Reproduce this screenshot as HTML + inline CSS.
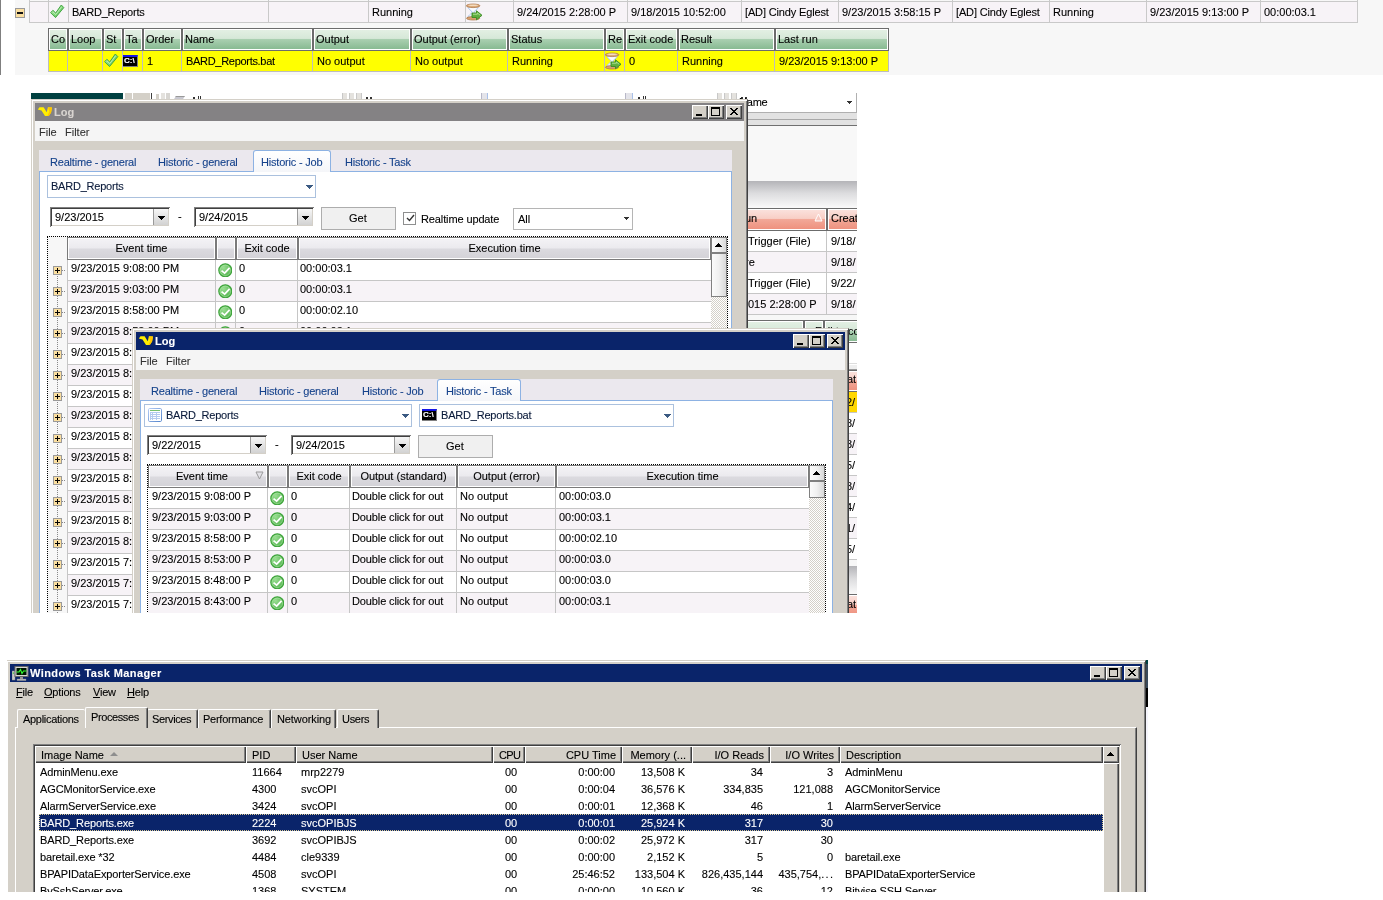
<!DOCTYPE html>
<html><head><meta charset="utf-8"><title>Log</title>
<style>
html,body{margin:0;padding:0;background:#fff}
body{width:1383px;height:900px;position:relative;overflow:hidden;font:11px/13px "Liberation Sans",sans-serif;color:#000}
div,span,svg{position:absolute;box-sizing:border-box}
.t{white-space:nowrap;line-height:13px;font-size:11px;-webkit-text-stroke:.1px}
.gl{will-change:transform}
.b{font-weight:bold}
.w{color:#fff}
.bl{color:#15428b}
#top{left:0;top:0;width:1383px;height:75px;overflow:hidden}
#mid{left:31px;top:93px;width:826px;height:520px;overflow:hidden;background:#f7f7f7}
#tm{left:7px;top:660px;width:1141px;height:232px;overflow:hidden;background:#d4d0c8}
.gh{border:1px solid #6c6c6c;background:linear-gradient(#e4f0e4 0,#d6e8d8 45%,#a9cfb0 50%,#84b88f 100%);box-shadow:inset 0 0 0 1px #fff}
.yc{background:#ff0;border-right:1px solid #bdbdbd}
.sh{border:1px solid #6c6c6c;background:linear-gradient(#fbe3de 0,#f8cfc6 45%,#f2a898 50%,#ee8f7c 100%);box-shadow:inset 0 0 0 1px #fff}
.lh{border:1px solid #7a7a7a;background:linear-gradient(#f4f3f6 0,#ebeaee 48%,#dbdadf 52%,#d3d2d7 100%);box-shadow:inset 0 0 0 1px #fff}
.win{background:#d4d0c8;border:1px solid;border-color:#d4d0c8 #404040 #404040 #d4d0c8;box-shadow:inset 1px 1px 0 #fff,inset -1px -1px 0 #808080}
.sbb{border:1px solid #808080;background:linear-gradient(90deg,#fbfbfb,#f0f0f0 50%,#d9d9d9)}
.btn{background:#d4d0c8;box-shadow:inset 1px 1px 0 #fff,inset -1px -1px 0 #404040,inset -2px -2px 0 #808080}
.sunk{background:#fff;box-shadow:inset 1px 1px 0 #808080,inset -1px -1px 0 #fff,inset 2px 2px 0 #404040,inset -2px -2px 0 #d4d0c8}
</style></head>
<body>
<div id="top"><div class="gl" style="left:0;top:0;width:1383px;height:75px">
<div style="left:0px;top:0px;width:1px;height:75px;background:#7f7f7f"></div>
<div style="left:15px;top:0px;width:1368px;height:75px;background:#f7f7f7"></div>
<div style="left:29px;top:1px;width:1329px;height:22px;background:#f7f3f7;border-top:1px solid #c9c9c9;border-bottom:1px solid #c9c9c9"></div>
<div style="left:29px;top:0px;width:1px;height:23px;background:#c9c9c9"></div>
<div style="left:48px;top:0px;width:1px;height:23px;background:#c9c9c9"></div>
<div style="left:68px;top:0px;width:1px;height:23px;background:#c9c9c9"></div>
<div style="left:268px;top:0px;width:1px;height:23px;background:#c9c9c9"></div>
<div style="left:368px;top:0px;width:1px;height:23px;background:#c9c9c9"></div>
<div style="left:465px;top:0px;width:1px;height:23px;background:#c9c9c9"></div>
<div style="left:513px;top:0px;width:1px;height:23px;background:#c9c9c9"></div>
<div style="left:627px;top:0px;width:1px;height:23px;background:#c9c9c9"></div>
<div style="left:741px;top:0px;width:1px;height:23px;background:#c9c9c9"></div>
<div style="left:838px;top:0px;width:1px;height:23px;background:#c9c9c9"></div>
<div style="left:952px;top:0px;width:1px;height:23px;background:#c9c9c9"></div>
<div style="left:1049px;top:0px;width:1px;height:23px;background:#c9c9c9"></div>
<div style="left:1146px;top:0px;width:1px;height:23px;background:#c9c9c9"></div>
<div style="left:1260px;top:0px;width:1px;height:23px;background:#c9c9c9"></div>
<div style="left:1357px;top:0px;width:1px;height:23px;background:#c9c9c9"></div>
<div style="left:15px;top:8px;width:10px;height:10px;background:#fbdf9f;border:1px solid #9a9a9a"><div style="left:1px;top:3px;width:6px;height:2px;background:#111"></div></div>
<svg style="left:50px;top:4px" width="15" height="15" viewBox="0 0 15 15"><defs><linearGradient id="ck1" x1="0" y1="0" x2="1" y2="1"><stop offset="0" stop-color="#d0f4c8"/><stop offset=".55" stop-color="#7ad474"/><stop offset="1" stop-color="#52b84e"/></linearGradient></defs><path d="M0.6 8.7 L2.9 6.3 L5.7 9 L11.3 1 L13.8 3.6 L5.5 13.6 Z" fill="url(#ck1)" stroke="#42a642" stroke-width="1" stroke-linejoin="round"/><path d="M2.9 7.8 L5.8 10.6 L11.6 2.8" fill="none" stroke="#d4f6cc" stroke-width=".9" opacity=".8"/></svg>
<span class="t" style="left:72px;top:6px;letter-spacing:-.22px">BARD_Reports</span>
<span class="t" style="left:372px;top:6px;">Running</span>
<svg style="left:466px;top:3px" width="17" height="18" viewBox="0 0 17 18"><path d="M1.8 3.2 H12.4 C12.4 6.4 8.3 7.8 8.3 9.2 C8.3 10.6 12.4 12 12.4 15 H1.8 C1.8 12 5.9 10.6 5.9 9.2 C5.9 7.8 1.8 6.4 1.8 3.2 Z" fill="#e6f0fc" stroke="#a4c4ee" stroke-width=".8"/><path d="M3.4 4.6 H10.8 C10.2 6.4 7.8 7.4 7.1 8.6 C6.4 7.4 4 6.4 3.4 4.6Z" fill="#fafcff"/><ellipse cx="7.1" cy="15.3" rx="6.6" ry="1.7" fill="#d8a070" stroke="#a87040" stroke-width=".7"/><ellipse cx="7.1" cy="2.8" rx="6.8" ry="1.8" fill="#dcaa7a" stroke="#a87040" stroke-width=".7"/><ellipse cx="7.1" cy="2.3" rx="5" ry=".8" fill="#f4dcc0"/><path d="M6 10 H10.5 V7.8 L16 12.3 L10.5 16.8 V14.5 H6 Z" fill="#5fb040" stroke="#3a8a24" stroke-width=".9" stroke-linejoin="round"/><path d="M7 11.2 H11.4 V10 L14.2 12.3" fill="none" stroke="#b4e49c" stroke-width=".9"/></svg>
<span class="t" style="left:517px;top:6px;">9/24/2015 2:28:00 P</span>
<span class="t" style="left:631px;top:6px;">9/18/2015 10:52:00</span>
<span class="t" style="left:745px;top:6px;letter-spacing:-.15px">[AD] Cindy Eglest</span>
<span class="t" style="left:842px;top:6px;">9/23/2015 3:58:15 P</span>
<span class="t" style="left:956px;top:6px;letter-spacing:-.15px">[AD] Cindy Eglest</span>
<span class="t" style="left:1053px;top:6px;">Running</span>
<span class="t" style="left:1150px;top:6px;">9/23/2015 9:13:00 P</span>
<span class="t" style="left:1264px;top:6px;">00:00:03.1</span>
<div class="gh" style="left:48px;top:28px;width:20px;height:23px;"></div>
<span class="t" style="left:51px;top:33px;">Co</span>
<div class="yc" style="left:48px;top:51px;width:20px;height:21px;border-bottom:1px solid #bdbdbd"></div>
<div class="gh" style="left:68px;top:28px;width:35px;height:23px;"></div>
<span class="t" style="left:71px;top:33px;">Loop</span>
<div class="yc" style="left:68px;top:51px;width:35px;height:21px;border-bottom:1px solid #bdbdbd"></div>
<div class="gh" style="left:103px;top:28px;width:20px;height:23px;"></div>
<span class="t" style="left:106px;top:33px;">St</span>
<div class="yc" style="left:103px;top:51px;width:20px;height:21px;border-bottom:1px solid #bdbdbd"></div>
<div class="gh" style="left:123px;top:28px;width:20px;height:23px;"></div>
<span class="t" style="left:126px;top:33px;">Ta</span>
<div class="yc" style="left:123px;top:51px;width:20px;height:21px;border-bottom:1px solid #bdbdbd"></div>
<div class="gh" style="left:143px;top:28px;width:39px;height:23px;"></div>
<span class="t" style="left:146px;top:33px;">Order</span>
<div class="yc" style="left:143px;top:51px;width:39px;height:21px;border-bottom:1px solid #bdbdbd"></div>
<span class="t" style="left:147px;top:55px;">1</span>
<div class="gh" style="left:182px;top:28px;width:131px;height:23px;"></div>
<span class="t" style="left:185px;top:33px;">Name</span>
<div class="yc" style="left:182px;top:51px;width:131px;height:21px;border-bottom:1px solid #bdbdbd"></div>
<span class="t" style="left:186px;top:55px;letter-spacing:-.3px">BARD_Reports.bat</span>
<div class="gh" style="left:313px;top:28px;width:98px;height:23px;"></div>
<span class="t" style="left:316px;top:33px;">Output</span>
<div class="yc" style="left:313px;top:51px;width:98px;height:21px;border-bottom:1px solid #bdbdbd"></div>
<span class="t" style="left:317px;top:55px;">No output</span>
<div class="gh" style="left:411px;top:28px;width:97px;height:23px;"></div>
<span class="t" style="left:414px;top:33px;">Output (error)</span>
<div class="yc" style="left:411px;top:51px;width:97px;height:21px;border-bottom:1px solid #bdbdbd"></div>
<span class="t" style="left:415px;top:55px;">No output</span>
<div class="gh" style="left:508px;top:28px;width:97px;height:23px;"></div>
<span class="t" style="left:511px;top:33px;">Status</span>
<div class="yc" style="left:508px;top:51px;width:97px;height:21px;border-bottom:1px solid #bdbdbd"></div>
<span class="t" style="left:512px;top:55px;">Running</span>
<div class="gh" style="left:605px;top:28px;width:20px;height:23px;"></div>
<span class="t" style="left:608px;top:33px;">Re</span>
<div class="yc" style="left:605px;top:51px;width:20px;height:21px;border-bottom:1px solid #bdbdbd"></div>
<div class="gh" style="left:625px;top:28px;width:53px;height:23px;"></div>
<span class="t" style="left:628px;top:33px;">Exit code</span>
<div class="yc" style="left:625px;top:51px;width:53px;height:21px;border-bottom:1px solid #bdbdbd"></div>
<span class="t" style="left:629px;top:55px;">0</span>
<div class="gh" style="left:678px;top:28px;width:97px;height:23px;"></div>
<span class="t" style="left:681px;top:33px;">Result</span>
<div class="yc" style="left:678px;top:51px;width:97px;height:21px;border-bottom:1px solid #bdbdbd"></div>
<span class="t" style="left:682px;top:55px;">Running</span>
<div class="gh" style="left:775px;top:28px;width:114px;height:23px;"></div>
<span class="t" style="left:778px;top:33px;">Last run</span>
<div class="yc" style="left:775px;top:51px;width:114px;height:21px;border-bottom:1px solid #bdbdbd"></div>
<span class="t" style="left:779px;top:55px;">9/23/2015 9:13:00 P</span>
<div style="left:48px;top:51px;width:1px;height:21px;background:#bdbdbd"></div>
<svg style="left:104px;top:53px" width="15" height="15" viewBox="0 0 15 15"><defs><linearGradient id="ck2" x1="0" y1="0" x2="1" y2="1"><stop offset="0" stop-color="#d0f4c8"/><stop offset=".55" stop-color="#7ad474"/><stop offset="1" stop-color="#52b84e"/></linearGradient></defs><path d="M0.6 8.7 L2.9 6.3 L5.7 9 L11.3 1 L13.8 3.6 L5.5 13.6 Z" fill="url(#ck2)" stroke="#42a642" stroke-width="1" stroke-linejoin="round"/><path d="M2.9 7.8 L5.8 10.6 L11.6 2.8" fill="none" stroke="#d4f6cc" stroke-width=".9" opacity=".8"/></svg>
<div style="left:123px;top:55px;width:15px;height:12px;background:#000;border-top:2px solid #1414e6;border-right:1px solid #808080;border-bottom:1px solid #808080;overflow:hidden"><span class="t" style="left:1px;top:-2px;font:bold 8px/12px 'Liberation Sans',sans-serif;color:#fff;letter-spacing:0">C:\</span></div>
<svg style="left:605px;top:52px" width="17" height="18" viewBox="0 0 17 18"><path d="M1.8 3.2 H12.4 C12.4 6.4 8.3 7.8 8.3 9.2 C8.3 10.6 12.4 12 12.4 15 H1.8 C1.8 12 5.9 10.6 5.9 9.2 C5.9 7.8 1.8 6.4 1.8 3.2 Z" fill="#e6f0fc" stroke="#a4c4ee" stroke-width=".8"/><path d="M3.4 4.6 H10.8 C10.2 6.4 7.8 7.4 7.1 8.6 C6.4 7.4 4 6.4 3.4 4.6Z" fill="#fafcff"/><ellipse cx="7.1" cy="15.3" rx="6.6" ry="1.7" fill="#d8a070" stroke="#a87040" stroke-width=".7"/><ellipse cx="7.1" cy="2.8" rx="6.8" ry="1.8" fill="#dcaa7a" stroke="#a87040" stroke-width=".7"/><ellipse cx="7.1" cy="2.3" rx="5" ry=".8" fill="#f4dcc0"/><path d="M6 10 H10.5 V7.8 L16 12.3 L10.5 16.8 V14.5 H6 Z" fill="#5fb040" stroke="#3a8a24" stroke-width=".9" stroke-linejoin="round"/><path d="M7 11.2 H11.4 V10 L14.2 12.3" fill="none" stroke="#b4e49c" stroke-width=".9"/></svg>
</div></div>
<div id="mid"><div class="gl" style="left:-31px;top:-93px;width:1383px;height:900px">
<div style="left:31px;top:93px;width:826px;height:6px;background:#fff"></div>
<div style="left:31px;top:93px;width:92px;height:6px;background:#004040"></div>
<div style="left:125px;top:93px;width:7px;height:6px;background:#d4d0c8"></div>
<div style="left:133px;top:93px;width:17px;height:6px;background:#d4d0c8"></div>
<div style="left:151px;top:93px;width:1px;height:6px;background:#404040"></div>
<div style="left:156px;top:94px;width:3px;height:5px;background:#d4d0c8"></div>
<div style="left:161px;top:93px;width:4px;height:6px;background:#e4e2de"></div>
<div style="left:166px;top:93px;width:4px;height:6px;background:#d8d6d2"></div>
<div style="left:175px;top:96px;width:9px;height:3px;background:#c8c8d0;border-top:1px solid #999;transform:skewX(-30deg)"></div>
<div style="left:193px;top:97px;width:2px;height:2px;background:#333"></div>
<div style="left:198px;top:96px;width:1px;height:3px;background:#333"></div>
<div style="left:200px;top:96px;width:1px;height:3px;background:#333"></div>
<div style="left:342px;top:93px;width:5px;height:6px;background:#e4e2de;border-left:1px solid #c8c8c8"></div>
<div style="left:349px;top:93px;width:5px;height:6px;background:#e4e2de;border-left:1px solid #c8c8c8"></div>
<div style="left:356px;top:93px;width:6px;height:6px;background:#e4e2de;border-left:1px solid #c8c8c8;border-right:1px solid #c8c8c8"></div>
<div style="left:366px;top:97px;width:2px;height:2px;background:#333"></div>
<div style="left:370px;top:97px;width:2px;height:2px;background:#333"></div>
<div style="left:481px;top:93px;width:7px;height:6px;background:#e4e4ea;border-left:1px solid #b8b8c8;border-right:1px solid #a8c0e8"></div>
<div style="left:625px;top:93px;width:8px;height:6px;background:#e4e4ea;border-left:1px solid #b8b8c8;border-right:1px solid #a8c0e8"></div>
<div style="left:638px;top:97px;width:2px;height:2px;background:#333"></div>
<div style="left:643px;top:96px;width:1px;height:3px;background:#333"></div>
<div style="left:645px;top:96px;width:1px;height:3px;background:#333"></div>
<div style="left:717px;top:93px;width:5px;height:6px;background:#e4e2de;border-left:1px solid #c8c8c8"></div>
<div style="left:724px;top:93px;width:5px;height:6px;background:#e4e2de;border-left:1px solid #c8c8c8"></div>
<div style="left:731px;top:93px;width:6px;height:6px;background:#e4e2de;border-left:1px solid #c8c8c8;border-right:1px solid #c8c8c8"></div>
<div style="left:741px;top:97px;width:2px;height:2px;background:#333"></div>
<div style="left:745px;top:97px;width:2px;height:2px;background:#333"></div>
<div style="left:748px;top:93px;width:109px;height:20px;background:#fff;border-right:1px solid #b0b0b0;border-bottom:1px solid #b0b0b0"></div>
<span class="t" style="left:739px;top:96px;letter-spacing:-.2px">Name</span>
<svg style="left:847px;top:101px" width="5" height="3" viewBox="0 0 5 3" shape-rendering="crispEdges"><path d="M0 0 H5 L2.5 3 Z" fill="#333"/></svg>
<div style="left:748px;top:113px;width:109px;height:13px;background:#e2e2e2;border-bottom:1px solid #707070"></div>
<div style="left:748px;top:119px;width:109px;height:1px;background:#a8a8a8"></div>
<div style="left:748px;top:126px;width:109px;height:55px;background:#f8f8f8"></div>
<div style="left:748px;top:181px;width:109px;height:27px;background:linear-gradient(#b4b4b8,#dcdcde 45%,#fafafa)"></div>
<div class="sh" style="left:700px;top:208px;width:127px;height:23px;"></div>
<span class="t" style="left:745px;top:212px;">un</span>
<svg style="left:814px;top:213px" width="9" height="9" viewBox="0 0 9 9"><path d="M4.5 1 L8 8 H1 Z" fill="#f6c8c0" stroke="#fff" stroke-width="1"/></svg>
<div class="sh" style="left:827px;top:208px;width:60px;height:23px;"></div>
<span class="t" style="left:831px;top:212px;">Creat</span>
<div style="left:700px;top:231px;width:127px;height:21px;background:#fff;border-right:1px solid #c6c6c6;border-bottom:1px solid #c6c6c6"></div>
<div style="left:827px;top:231px;width:60px;height:21px;background:#fff;border-bottom:1px solid #c6c6c6"></div>
<span class="t" style="left:748px;top:235px;">Trigger (File)</span>
<span class="t" style="left:831px;top:235px;">9/18/</span>
<div style="left:700px;top:252px;width:127px;height:21px;background:#f7f3f7;border-right:1px solid #c6c6c6;border-bottom:1px solid #c6c6c6"></div>
<div style="left:827px;top:252px;width:60px;height:21px;background:#f7f3f7;border-bottom:1px solid #c6c6c6"></div>
<span class="t" style="left:745px;top:256px;">re</span>
<span class="t" style="left:831px;top:256px;">9/18/</span>
<div style="left:700px;top:273px;width:127px;height:21px;background:#fff;border-right:1px solid #c6c6c6;border-bottom:1px solid #c6c6c6"></div>
<div style="left:827px;top:273px;width:60px;height:21px;background:#fff;border-bottom:1px solid #c6c6c6"></div>
<span class="t" style="left:748px;top:277px;">Trigger (File)</span>
<span class="t" style="left:831px;top:277px;">9/22/</span>
<div style="left:700px;top:294px;width:127px;height:21px;background:#f7f3f7;border-right:1px solid #c6c6c6;border-bottom:1px solid #c6c6c6"></div>
<div style="left:827px;top:294px;width:60px;height:21px;background:#f7f3f7;border-bottom:1px solid #c6c6c6"></div>
<span class="t" style="left:748px;top:298px;">015 2:28:00 P</span>
<span class="t" style="left:831px;top:298px;">9/18/</span>
<div style="left:748px;top:315px;width:109px;height:6px;background:#f7f7f7"></div>
<div class="gh" style="left:700px;top:320px;width:104px;height:23px;"></div>
<div class="gh" style="left:804px;top:320px;width:20px;height:23px;"></div>
<div class="gh" style="left:824px;top:320px;width:80px;height:23px;"></div>
<span class="t" style="left:815px;top:325px;">Fail to co</span>
<div style="left:849px;top:343px;width:8px;height:270px;background:#fff"></div>
<div style="left:849px;top:363px;width:8px;height:1px;background:#ddd"></div>
<div style="left:849px;top:365px;width:8px;height:4px;background:#eee"></div>
<div style="left:849px;top:369px;width:8px;height:1px;background:#999"></div>
<div class="sh" style="left:800px;top:370px;width:80px;height:22px;border-left:0"></div>
<span class="t" style="left:847px;top:373px;">at</span>
<div style="left:849px;top:392px;width:8px;height:21px;background:#ffd700;border-bottom:1px solid #c6c6c6"></div>
<span class="t" style="left:846px;top:396px;">2/</span>
<div style="left:849px;top:413px;width:8px;height:21px;background:#fff;border-bottom:1px solid #c6c6c6"></div>
<span class="t" style="left:846px;top:417px;">8/</span>
<div style="left:849px;top:434px;width:8px;height:21px;background:#f7f3f7;border-bottom:1px solid #c6c6c6"></div>
<span class="t" style="left:846px;top:438px;">8/</span>
<div style="left:849px;top:455px;width:8px;height:21px;background:#fff;border-bottom:1px solid #c6c6c6"></div>
<span class="t" style="left:846px;top:459px;">5/</span>
<div style="left:849px;top:476px;width:8px;height:21px;background:#f7f3f7;border-bottom:1px solid #c6c6c6"></div>
<span class="t" style="left:846px;top:480px;">8/</span>
<div style="left:849px;top:497px;width:8px;height:21px;background:#fff;border-bottom:1px solid #c6c6c6"></div>
<span class="t" style="left:846px;top:501px;">4/</span>
<div style="left:849px;top:518px;width:8px;height:21px;background:#f7f3f7;border-bottom:1px solid #c6c6c6"></div>
<span class="t" style="left:846px;top:522px;">1/</span>
<div style="left:849px;top:539px;width:8px;height:21px;background:#fff;border-bottom:1px solid #c6c6c6"></div>
<span class="t" style="left:846px;top:543px;">5/</span>
<div style="left:849px;top:560px;width:8px;height:6px;background:#f7f7f7"></div>
<div style="left:849px;top:566px;width:8px;height:28px;background:linear-gradient(#b4b4b8,#dcdcde 45%,#fafafa)"></div>
<div class="sh" style="left:800px;top:594px;width:80px;height:23px;border-left:0"></div>
<span class="t" style="left:847px;top:598px;">at</span>
<div class="win" style="left:31px;top:99px;width:717px;height:600px;"></div>
<div style="left:35px;top:103px;width:709px;height:18px;background:#848284"></div>
<svg style="left:37px;top:106px" width="18" height="12" viewBox="0 0 18 12"><path d="M0.8 3.6 L2.5 1.3 L6.6 1.3 L9.75 6.2 L10.9 1.3 L15 1.5 L14.1 6.5 L11.8 9.9 L8 9.9 L4.5 4.4 L2.5 3.9 Z" fill="#ffee00"/><path d="M10.9 1.3 L15 1.5 L14.1 6.5 L11.8 9.9 L10.4 9.9 L12.3 5.5 Z" fill="#ffc400"/></svg>
<span class="t" style="left:54px;top:106px;color:#d8d4d0;font-weight:bold;letter-spacing:0px">Log</span>
<div class="btn" style="left:726px;top:105px;width:16px;height:14px;"><svg style="left:4px;top:3px" width="8" height="7" viewBox="0 0 8 7" shape-rendering="crispEdges"><path d="M0 0h2v1h1v1h2v-1h1v-1h2v1h-1v1h-1v1h-1v1h1v1h1v1h1v1h-2v-1h-1v-1h-2v1h-1v1h-2v-1h1v-1h1v-1h1v-1h-1v-1h-1v-1h-1z" fill="#000"/></svg></div>
<div class="btn" style="left:708px;top:105px;width:16px;height:14px;"><div style="left:3px;top:2px;width:9px;height:9px;border:1px solid #000;border-top-width:2px"></div></div>
<div class="btn" style="left:692px;top:105px;width:16px;height:14px;"><div style="left:4px;top:9px;width:6px;height:2px;background:#000"></div></div>
<div style="left:35px;top:121px;width:709px;height:20px;background:#f5f5f5"></div>
<span class="t" style="left:39px;top:126px;color:#333">File</span>
<span class="t" style="left:65px;top:126px;color:#333">Filter</span>
<div style="left:39px;top:150px;width:693px;height:21px;background:#ebe8ee"></div>
<div style="left:39px;top:171px;width:693px;height:600px;background:#fff;border:1px solid #8db2e3"></div>
<div style="left:253px;top:150px;width:78px;height:22px;background:linear-gradient(#fff,#f5f6f9);border:1px solid #8db2e3;border-bottom:0;border-radius:3px 3px 0 0"></div>
<span class="t bl" style="left:50px;top:156px;letter-spacing:-.2px">Realtime - general</span>
<span class="t bl" style="left:158px;top:156px;letter-spacing:-.2px">Historic - general</span>
<span class="t bl" style="left:261px;top:156px;letter-spacing:-.2px">Historic - Job</span>
<span class="t bl" style="left:345px;top:156px;letter-spacing:-.2px">Historic - Task</span>
<div style="left:47px;top:175px;width:269px;height:23px;background:#fff;border:1px solid #abc1de"></div>
<span class="t" style="left:51px;top:180px;letter-spacing:-.22px;color:#0a1a3a">BARD_Reports</span>
<svg style="left:306px;top:185px" width="7" height="4" viewBox="0 0 7 4" shape-rendering="crispEdges"><path d="M0 0 H7 L3.5 4 Z" fill="#3b5a82"/></svg>
<div class="sunk" style="left:50px;top:207px;width:120px;height:20px;"></div>
<span class="t" style="left:55px;top:211px;">9/23/2015</span>
<div style="left:153px;top:209px;width:15px;height:16px;background:linear-gradient(#f6f6f6,#d2d2d2);border-left:1px solid #9a9a9a"><svg style="left:4px;top:7px" width="7" height="4" viewBox="0 0 7 4" shape-rendering="crispEdges"><path d="M0 0 H7 L3.5 4 Z" fill="#000"/></svg>
</div>
<span class="t" style="left:178px;top:210px;">-</span>
<div class="sunk" style="left:194px;top:207px;width:120px;height:20px;"></div>
<span class="t" style="left:199px;top:211px;">9/24/2015</span>
<div style="left:297px;top:209px;width:15px;height:16px;background:linear-gradient(#f6f6f6,#d2d2d2);border-left:1px solid #9a9a9a"><svg style="left:4px;top:7px" width="7" height="4" viewBox="0 0 7 4" shape-rendering="crispEdges"><path d="M0 0 H7 L3.5 4 Z" fill="#000"/></svg>
</div>
<div style="left:321px;top:207px;width:75px;height:23px;background:#f0f0f0;border:1px solid #adadad"></div>
<span class="t" style="left:349px;top:212px;">Get</span>
<div style="left:403px;top:212px;width:13px;height:13px;background:#fff;border:1px solid #8e8f8f"></div>
<svg style="left:406px;top:214px" width="9" height="8" viewBox="0 0 9 8"><path d="M1 4 L3.5 6.5 L8 1" fill="none" stroke="#333" stroke-width="1.4"/></svg>
<span class="t" style="left:421px;top:213px;letter-spacing:-.12px">Realtime update</span>
<div style="left:513px;top:208px;width:120px;height:22px;background:#fff;border:1px solid #b5b5b5"></div>
<span class="t" style="left:518px;top:213px;">All</span>
<svg style="left:624px;top:217px" width="5" height="3" viewBox="0 0 5 3" shape-rendering="crispEdges"><path d="M0 0 H5 L2.5 3 Z" fill="#333"/></svg>
<div style="left:47px;top:236px;width:681px;height:400px;border:1px dotted #000;background:#f7f7f7"></div>
<div class="lh" style="left:67px;top:237px;width:149px;height:23px;"></div>
<span class="t" style="left:67px;top:242px;width:149px;text-align:center">Event time</span>
<div class="lh" style="left:216px;top:237px;width:20px;height:23px;"></div>
<div class="lh" style="left:236px;top:237px;width:62px;height:23px;"></div>
<span class="t" style="left:236px;top:242px;width:62px;text-align:center">Exit code</span>
<div class="lh" style="left:298px;top:237px;width:413px;height:23px;"></div>
<span class="t" style="left:298px;top:242px;width:413px;text-align:center">Execution time</span>
<div style="left:711px;top:237px;width:16px;height:400px;background-image:repeating-conic-gradient(#fff 0 25%,#d4d0c8 0 50%);background-size:2px 2px"></div>
<div class="sbb" style="left:711px;top:237px;width:16px;height:16px;"><svg style="left:3px;top:5px" width="7" height="4" viewBox="0 0 7 4" shape-rendering="crispEdges"><path d="M0 4 H7 L3.5 0 Z" fill="#000"/></svg></div>
<div class="sbb" style="left:711px;top:253px;width:16px;height:44px;"></div>
<div style="left:57px;top:276px;width:1px;height:360px;background-image:repeating-linear-gradient(#888 0 1px,transparent 1px 2px)"></div>
<div style="left:67px;top:260px;width:644px;height:21px;background:#fff;border-bottom:1px solid #c6c6c6"></div>
<div style="left:67px;top:260px;width:1px;height:21px;background:#c6c6c6"></div>
<div style="left:215px;top:260px;width:1px;height:21px;background:#c6c6c6"></div>
<div style="left:235px;top:260px;width:1px;height:21px;background:#c6c6c6"></div>
<div style="left:297px;top:260px;width:1px;height:21px;background:#c6c6c6"></div>
<div style="left:62px;top:270px;width:4px;height:1px;background-image:repeating-linear-gradient(90deg,#888 0 1px,transparent 1px 2px)"></div>
<div style="left:53px;top:266px;width:9px;height:9px;background:#fbdf9f;border:1px solid #9a9a9a"><div style="left:1px;top:3px;width:5px;height:1px;background:#000"></div><div style="left:3px;top:1px;width:1px;height:5px;background:#000"></div></div>
<span class="t" style="left:71px;top:262px;">9/23/2015 9:08:00 PM</span>
<svg style="left:217.7px;top:262.7px" width="14.6" height="14.6" viewBox="0 0 16 16"><defs><radialGradient id="g1" cx=".35" cy=".3" r=".85"><stop offset="0" stop-color="#9adf92"/><stop offset="1" stop-color="#46aa42"/></radialGradient></defs><circle cx="8" cy="8" r="7.1" fill="url(#g1)" stroke="#3fa43c" stroke-width="1.3"/><circle cx="8" cy="8" r="5.7" fill="none" stroke="#b6ecb0" stroke-width=".7" opacity=".8"/><path d="M4.6 9 L7.3 11.1 L12 6" fill="none" stroke="#fff" stroke-width="1.9" stroke-linecap="square" stroke-linejoin="miter"/></svg>
<span class="t" style="left:239px;top:262px;">0</span>
<span class="t" style="left:300px;top:262px;">00:00:03.1</span>
<div style="left:67px;top:281px;width:644px;height:21px;background:#f7f3f7;border-bottom:1px solid #c6c6c6"></div>
<div style="left:67px;top:281px;width:1px;height:21px;background:#c6c6c6"></div>
<div style="left:215px;top:281px;width:1px;height:21px;background:#c6c6c6"></div>
<div style="left:235px;top:281px;width:1px;height:21px;background:#c6c6c6"></div>
<div style="left:297px;top:281px;width:1px;height:21px;background:#c6c6c6"></div>
<div style="left:62px;top:291px;width:4px;height:1px;background-image:repeating-linear-gradient(90deg,#888 0 1px,transparent 1px 2px)"></div>
<div style="left:53px;top:287px;width:9px;height:9px;background:#fbdf9f;border:1px solid #9a9a9a"><div style="left:1px;top:3px;width:5px;height:1px;background:#000"></div><div style="left:3px;top:1px;width:1px;height:5px;background:#000"></div></div>
<span class="t" style="left:71px;top:283px;">9/23/2015 9:03:00 PM</span>
<svg style="left:217.7px;top:283.7px" width="14.6" height="14.6" viewBox="0 0 16 16"><defs><radialGradient id="g2" cx=".35" cy=".3" r=".85"><stop offset="0" stop-color="#9adf92"/><stop offset="1" stop-color="#46aa42"/></radialGradient></defs><circle cx="8" cy="8" r="7.1" fill="url(#g2)" stroke="#3fa43c" stroke-width="1.3"/><circle cx="8" cy="8" r="5.7" fill="none" stroke="#b6ecb0" stroke-width=".7" opacity=".8"/><path d="M4.6 9 L7.3 11.1 L12 6" fill="none" stroke="#fff" stroke-width="1.9" stroke-linecap="square" stroke-linejoin="miter"/></svg>
<span class="t" style="left:239px;top:283px;">0</span>
<span class="t" style="left:300px;top:283px;">00:00:03.1</span>
<div style="left:67px;top:302px;width:644px;height:21px;background:#fff;border-bottom:1px solid #c6c6c6"></div>
<div style="left:67px;top:302px;width:1px;height:21px;background:#c6c6c6"></div>
<div style="left:215px;top:302px;width:1px;height:21px;background:#c6c6c6"></div>
<div style="left:235px;top:302px;width:1px;height:21px;background:#c6c6c6"></div>
<div style="left:297px;top:302px;width:1px;height:21px;background:#c6c6c6"></div>
<div style="left:62px;top:312px;width:4px;height:1px;background-image:repeating-linear-gradient(90deg,#888 0 1px,transparent 1px 2px)"></div>
<div style="left:53px;top:308px;width:9px;height:9px;background:#fbdf9f;border:1px solid #9a9a9a"><div style="left:1px;top:3px;width:5px;height:1px;background:#000"></div><div style="left:3px;top:1px;width:1px;height:5px;background:#000"></div></div>
<span class="t" style="left:71px;top:304px;">9/23/2015 8:58:00 PM</span>
<svg style="left:217.7px;top:304.7px" width="14.6" height="14.6" viewBox="0 0 16 16"><defs><radialGradient id="g3" cx=".35" cy=".3" r=".85"><stop offset="0" stop-color="#9adf92"/><stop offset="1" stop-color="#46aa42"/></radialGradient></defs><circle cx="8" cy="8" r="7.1" fill="url(#g3)" stroke="#3fa43c" stroke-width="1.3"/><circle cx="8" cy="8" r="5.7" fill="none" stroke="#b6ecb0" stroke-width=".7" opacity=".8"/><path d="M4.6 9 L7.3 11.1 L12 6" fill="none" stroke="#fff" stroke-width="1.9" stroke-linecap="square" stroke-linejoin="miter"/></svg>
<span class="t" style="left:239px;top:304px;">0</span>
<span class="t" style="left:300px;top:304px;">00:00:02.10</span>
<div style="left:67px;top:323px;width:644px;height:21px;background:#f7f3f7;border-bottom:1px solid #c6c6c6"></div>
<div style="left:67px;top:323px;width:1px;height:21px;background:#c6c6c6"></div>
<div style="left:215px;top:323px;width:1px;height:21px;background:#c6c6c6"></div>
<div style="left:235px;top:323px;width:1px;height:21px;background:#c6c6c6"></div>
<div style="left:297px;top:323px;width:1px;height:21px;background:#c6c6c6"></div>
<div style="left:62px;top:333px;width:4px;height:1px;background-image:repeating-linear-gradient(90deg,#888 0 1px,transparent 1px 2px)"></div>
<div style="left:53px;top:329px;width:9px;height:9px;background:#fbdf9f;border:1px solid #9a9a9a"><div style="left:1px;top:3px;width:5px;height:1px;background:#000"></div><div style="left:3px;top:1px;width:1px;height:5px;background:#000"></div></div>
<span class="t" style="left:71px;top:325px;">9/23/2015 8:53:00 PM</span>
<svg style="left:217.7px;top:325.7px" width="14.6" height="14.6" viewBox="0 0 16 16"><defs><radialGradient id="g4" cx=".35" cy=".3" r=".85"><stop offset="0" stop-color="#9adf92"/><stop offset="1" stop-color="#46aa42"/></radialGradient></defs><circle cx="8" cy="8" r="7.1" fill="url(#g4)" stroke="#3fa43c" stroke-width="1.3"/><circle cx="8" cy="8" r="5.7" fill="none" stroke="#b6ecb0" stroke-width=".7" opacity=".8"/><path d="M4.6 9 L7.3 11.1 L12 6" fill="none" stroke="#fff" stroke-width="1.9" stroke-linecap="square" stroke-linejoin="miter"/></svg>
<span class="t" style="left:239px;top:325px;">0</span>
<span class="t" style="left:300px;top:325px;">00:00:03.1</span>
<div style="left:67px;top:344px;width:644px;height:21px;background:#fff;border-bottom:1px solid #c6c6c6"></div>
<div style="left:67px;top:344px;width:1px;height:21px;background:#c6c6c6"></div>
<div style="left:215px;top:344px;width:1px;height:21px;background:#c6c6c6"></div>
<div style="left:235px;top:344px;width:1px;height:21px;background:#c6c6c6"></div>
<div style="left:297px;top:344px;width:1px;height:21px;background:#c6c6c6"></div>
<div style="left:62px;top:354px;width:4px;height:1px;background-image:repeating-linear-gradient(90deg,#888 0 1px,transparent 1px 2px)"></div>
<div style="left:53px;top:350px;width:9px;height:9px;background:#fbdf9f;border:1px solid #9a9a9a"><div style="left:1px;top:3px;width:5px;height:1px;background:#000"></div><div style="left:3px;top:1px;width:1px;height:5px;background:#000"></div></div>
<span class="t" style="left:71px;top:346px;">9/23/2015 8:48:00 PM</span>
<div style="left:67px;top:365px;width:644px;height:21px;background:#f7f3f7;border-bottom:1px solid #c6c6c6"></div>
<div style="left:67px;top:365px;width:1px;height:21px;background:#c6c6c6"></div>
<div style="left:215px;top:365px;width:1px;height:21px;background:#c6c6c6"></div>
<div style="left:235px;top:365px;width:1px;height:21px;background:#c6c6c6"></div>
<div style="left:297px;top:365px;width:1px;height:21px;background:#c6c6c6"></div>
<div style="left:62px;top:375px;width:4px;height:1px;background-image:repeating-linear-gradient(90deg,#888 0 1px,transparent 1px 2px)"></div>
<div style="left:53px;top:371px;width:9px;height:9px;background:#fbdf9f;border:1px solid #9a9a9a"><div style="left:1px;top:3px;width:5px;height:1px;background:#000"></div><div style="left:3px;top:1px;width:1px;height:5px;background:#000"></div></div>
<span class="t" style="left:71px;top:367px;">9/23/2015 8:43:00 PM</span>
<div style="left:67px;top:386px;width:644px;height:21px;background:#fff;border-bottom:1px solid #c6c6c6"></div>
<div style="left:67px;top:386px;width:1px;height:21px;background:#c6c6c6"></div>
<div style="left:215px;top:386px;width:1px;height:21px;background:#c6c6c6"></div>
<div style="left:235px;top:386px;width:1px;height:21px;background:#c6c6c6"></div>
<div style="left:297px;top:386px;width:1px;height:21px;background:#c6c6c6"></div>
<div style="left:62px;top:396px;width:4px;height:1px;background-image:repeating-linear-gradient(90deg,#888 0 1px,transparent 1px 2px)"></div>
<div style="left:53px;top:392px;width:9px;height:9px;background:#fbdf9f;border:1px solid #9a9a9a"><div style="left:1px;top:3px;width:5px;height:1px;background:#000"></div><div style="left:3px;top:1px;width:1px;height:5px;background:#000"></div></div>
<span class="t" style="left:71px;top:388px;">9/23/2015 8:38:00 PM</span>
<div style="left:67px;top:407px;width:644px;height:21px;background:#f7f3f7;border-bottom:1px solid #c6c6c6"></div>
<div style="left:67px;top:407px;width:1px;height:21px;background:#c6c6c6"></div>
<div style="left:215px;top:407px;width:1px;height:21px;background:#c6c6c6"></div>
<div style="left:235px;top:407px;width:1px;height:21px;background:#c6c6c6"></div>
<div style="left:297px;top:407px;width:1px;height:21px;background:#c6c6c6"></div>
<div style="left:62px;top:417px;width:4px;height:1px;background-image:repeating-linear-gradient(90deg,#888 0 1px,transparent 1px 2px)"></div>
<div style="left:53px;top:413px;width:9px;height:9px;background:#fbdf9f;border:1px solid #9a9a9a"><div style="left:1px;top:3px;width:5px;height:1px;background:#000"></div><div style="left:3px;top:1px;width:1px;height:5px;background:#000"></div></div>
<span class="t" style="left:71px;top:409px;">9/23/2015 8:33:00 PM</span>
<div style="left:67px;top:428px;width:644px;height:21px;background:#fff;border-bottom:1px solid #c6c6c6"></div>
<div style="left:67px;top:428px;width:1px;height:21px;background:#c6c6c6"></div>
<div style="left:215px;top:428px;width:1px;height:21px;background:#c6c6c6"></div>
<div style="left:235px;top:428px;width:1px;height:21px;background:#c6c6c6"></div>
<div style="left:297px;top:428px;width:1px;height:21px;background:#c6c6c6"></div>
<div style="left:62px;top:438px;width:4px;height:1px;background-image:repeating-linear-gradient(90deg,#888 0 1px,transparent 1px 2px)"></div>
<div style="left:53px;top:434px;width:9px;height:9px;background:#fbdf9f;border:1px solid #9a9a9a"><div style="left:1px;top:3px;width:5px;height:1px;background:#000"></div><div style="left:3px;top:1px;width:1px;height:5px;background:#000"></div></div>
<span class="t" style="left:71px;top:430px;">9/23/2015 8:28:00 PM</span>
<div style="left:67px;top:449px;width:644px;height:21px;background:#f7f3f7;border-bottom:1px solid #c6c6c6"></div>
<div style="left:67px;top:449px;width:1px;height:21px;background:#c6c6c6"></div>
<div style="left:215px;top:449px;width:1px;height:21px;background:#c6c6c6"></div>
<div style="left:235px;top:449px;width:1px;height:21px;background:#c6c6c6"></div>
<div style="left:297px;top:449px;width:1px;height:21px;background:#c6c6c6"></div>
<div style="left:62px;top:459px;width:4px;height:1px;background-image:repeating-linear-gradient(90deg,#888 0 1px,transparent 1px 2px)"></div>
<div style="left:53px;top:455px;width:9px;height:9px;background:#fbdf9f;border:1px solid #9a9a9a"><div style="left:1px;top:3px;width:5px;height:1px;background:#000"></div><div style="left:3px;top:1px;width:1px;height:5px;background:#000"></div></div>
<span class="t" style="left:71px;top:451px;">9/23/2015 8:23:00 PM</span>
<div style="left:67px;top:470px;width:644px;height:21px;background:#fff;border-bottom:1px solid #c6c6c6"></div>
<div style="left:67px;top:470px;width:1px;height:21px;background:#c6c6c6"></div>
<div style="left:215px;top:470px;width:1px;height:21px;background:#c6c6c6"></div>
<div style="left:235px;top:470px;width:1px;height:21px;background:#c6c6c6"></div>
<div style="left:297px;top:470px;width:1px;height:21px;background:#c6c6c6"></div>
<div style="left:62px;top:480px;width:4px;height:1px;background-image:repeating-linear-gradient(90deg,#888 0 1px,transparent 1px 2px)"></div>
<div style="left:53px;top:476px;width:9px;height:9px;background:#fbdf9f;border:1px solid #9a9a9a"><div style="left:1px;top:3px;width:5px;height:1px;background:#000"></div><div style="left:3px;top:1px;width:1px;height:5px;background:#000"></div></div>
<span class="t" style="left:71px;top:472px;">9/23/2015 8:18:00 PM</span>
<div style="left:67px;top:491px;width:644px;height:21px;background:#f7f3f7;border-bottom:1px solid #c6c6c6"></div>
<div style="left:67px;top:491px;width:1px;height:21px;background:#c6c6c6"></div>
<div style="left:215px;top:491px;width:1px;height:21px;background:#c6c6c6"></div>
<div style="left:235px;top:491px;width:1px;height:21px;background:#c6c6c6"></div>
<div style="left:297px;top:491px;width:1px;height:21px;background:#c6c6c6"></div>
<div style="left:62px;top:501px;width:4px;height:1px;background-image:repeating-linear-gradient(90deg,#888 0 1px,transparent 1px 2px)"></div>
<div style="left:53px;top:497px;width:9px;height:9px;background:#fbdf9f;border:1px solid #9a9a9a"><div style="left:1px;top:3px;width:5px;height:1px;background:#000"></div><div style="left:3px;top:1px;width:1px;height:5px;background:#000"></div></div>
<span class="t" style="left:71px;top:493px;">9/23/2015 8:13:00 PM</span>
<div style="left:67px;top:512px;width:644px;height:21px;background:#fff;border-bottom:1px solid #c6c6c6"></div>
<div style="left:67px;top:512px;width:1px;height:21px;background:#c6c6c6"></div>
<div style="left:215px;top:512px;width:1px;height:21px;background:#c6c6c6"></div>
<div style="left:235px;top:512px;width:1px;height:21px;background:#c6c6c6"></div>
<div style="left:297px;top:512px;width:1px;height:21px;background:#c6c6c6"></div>
<div style="left:62px;top:522px;width:4px;height:1px;background-image:repeating-linear-gradient(90deg,#888 0 1px,transparent 1px 2px)"></div>
<div style="left:53px;top:518px;width:9px;height:9px;background:#fbdf9f;border:1px solid #9a9a9a"><div style="left:1px;top:3px;width:5px;height:1px;background:#000"></div><div style="left:3px;top:1px;width:1px;height:5px;background:#000"></div></div>
<span class="t" style="left:71px;top:514px;">9/23/2015 8:08:00 PM</span>
<div style="left:67px;top:533px;width:644px;height:21px;background:#f7f3f7;border-bottom:1px solid #c6c6c6"></div>
<div style="left:67px;top:533px;width:1px;height:21px;background:#c6c6c6"></div>
<div style="left:215px;top:533px;width:1px;height:21px;background:#c6c6c6"></div>
<div style="left:235px;top:533px;width:1px;height:21px;background:#c6c6c6"></div>
<div style="left:297px;top:533px;width:1px;height:21px;background:#c6c6c6"></div>
<div style="left:62px;top:543px;width:4px;height:1px;background-image:repeating-linear-gradient(90deg,#888 0 1px,transparent 1px 2px)"></div>
<div style="left:53px;top:539px;width:9px;height:9px;background:#fbdf9f;border:1px solid #9a9a9a"><div style="left:1px;top:3px;width:5px;height:1px;background:#000"></div><div style="left:3px;top:1px;width:1px;height:5px;background:#000"></div></div>
<span class="t" style="left:71px;top:535px;">9/23/2015 8:03:00 PM</span>
<div style="left:67px;top:554px;width:644px;height:21px;background:#fff;border-bottom:1px solid #c6c6c6"></div>
<div style="left:67px;top:554px;width:1px;height:21px;background:#c6c6c6"></div>
<div style="left:215px;top:554px;width:1px;height:21px;background:#c6c6c6"></div>
<div style="left:235px;top:554px;width:1px;height:21px;background:#c6c6c6"></div>
<div style="left:297px;top:554px;width:1px;height:21px;background:#c6c6c6"></div>
<div style="left:62px;top:564px;width:4px;height:1px;background-image:repeating-linear-gradient(90deg,#888 0 1px,transparent 1px 2px)"></div>
<div style="left:53px;top:560px;width:9px;height:9px;background:#fbdf9f;border:1px solid #9a9a9a"><div style="left:1px;top:3px;width:5px;height:1px;background:#000"></div><div style="left:3px;top:1px;width:1px;height:5px;background:#000"></div></div>
<span class="t" style="left:71px;top:556px;">9/23/2015 7:58:00 PM</span>
<div style="left:67px;top:575px;width:644px;height:21px;background:#f7f3f7;border-bottom:1px solid #c6c6c6"></div>
<div style="left:67px;top:575px;width:1px;height:21px;background:#c6c6c6"></div>
<div style="left:215px;top:575px;width:1px;height:21px;background:#c6c6c6"></div>
<div style="left:235px;top:575px;width:1px;height:21px;background:#c6c6c6"></div>
<div style="left:297px;top:575px;width:1px;height:21px;background:#c6c6c6"></div>
<div style="left:62px;top:585px;width:4px;height:1px;background-image:repeating-linear-gradient(90deg,#888 0 1px,transparent 1px 2px)"></div>
<div style="left:53px;top:581px;width:9px;height:9px;background:#fbdf9f;border:1px solid #9a9a9a"><div style="left:1px;top:3px;width:5px;height:1px;background:#000"></div><div style="left:3px;top:1px;width:1px;height:5px;background:#000"></div></div>
<span class="t" style="left:71px;top:577px;">9/23/2015 7:53:00 PM</span>
<div style="left:67px;top:596px;width:644px;height:21px;background:#fff;border-bottom:1px solid #c6c6c6"></div>
<div style="left:67px;top:596px;width:1px;height:21px;background:#c6c6c6"></div>
<div style="left:215px;top:596px;width:1px;height:21px;background:#c6c6c6"></div>
<div style="left:235px;top:596px;width:1px;height:21px;background:#c6c6c6"></div>
<div style="left:297px;top:596px;width:1px;height:21px;background:#c6c6c6"></div>
<div style="left:62px;top:606px;width:4px;height:1px;background-image:repeating-linear-gradient(90deg,#888 0 1px,transparent 1px 2px)"></div>
<div style="left:53px;top:602px;width:9px;height:9px;background:#fbdf9f;border:1px solid #9a9a9a"><div style="left:1px;top:3px;width:5px;height:1px;background:#000"></div><div style="left:3px;top:1px;width:1px;height:5px;background:#000"></div></div>
<span class="t" style="left:71px;top:598px;">9/23/2015 7:48:00 PM</span>
<div class="win" style="left:132px;top:328px;width:717px;height:600px;"></div>
<div style="left:136px;top:332px;width:709px;height:18px;background:#0a246a"></div>
<svg style="left:138px;top:335px" width="18" height="12" viewBox="0 0 18 12"><path d="M0.8 3.6 L2.5 1.3 L6.6 1.3 L9.75 6.2 L10.9 1.3 L15 1.5 L14.1 6.5 L11.8 9.9 L8 9.9 L4.5 4.4 L2.5 3.9 Z" fill="#ffee00"/><path d="M10.9 1.3 L15 1.5 L14.1 6.5 L11.8 9.9 L10.4 9.9 L12.3 5.5 Z" fill="#ffc400"/></svg>
<span class="t" style="left:155px;top:335px;color:#fff;font-weight:bold;letter-spacing:0px">Log</span>
<div class="btn" style="left:827px;top:334px;width:16px;height:14px;"><svg style="left:4px;top:3px" width="8" height="7" viewBox="0 0 8 7" shape-rendering="crispEdges"><path d="M0 0h2v1h1v1h2v-1h1v-1h2v1h-1v1h-1v1h-1v1h1v1h1v1h1v1h-2v-1h-1v-1h-2v1h-1v1h-2v-1h1v-1h1v-1h1v-1h-1v-1h-1v-1h-1z" fill="#000"/></svg></div>
<div class="btn" style="left:809px;top:334px;width:16px;height:14px;"><div style="left:3px;top:2px;width:9px;height:9px;border:1px solid #000;border-top-width:2px"></div></div>
<div class="btn" style="left:793px;top:334px;width:16px;height:14px;"><div style="left:4px;top:9px;width:6px;height:2px;background:#000"></div></div>
<div style="left:136px;top:350px;width:709px;height:20px;background:#f5f5f5"></div>
<span class="t" style="left:140px;top:355px;color:#333">File</span>
<span class="t" style="left:166px;top:355px;color:#333">Filter</span>
<div style="left:140px;top:379px;width:693px;height:21px;background:#ebe8ee"></div>
<div style="left:140px;top:400px;width:693px;height:600px;background:#fff;border:1px solid #8db2e3"></div>
<div style="left:437px;top:379px;width:84px;height:22px;background:linear-gradient(#fff,#f5f6f9);border:1px solid #8db2e3;border-bottom:0;border-radius:3px 3px 0 0"></div>
<span class="t bl" style="left:151px;top:385px;letter-spacing:-.2px">Realtime - general</span>
<span class="t bl" style="left:259px;top:385px;letter-spacing:-.2px">Historic - general</span>
<span class="t bl" style="left:362px;top:385px;letter-spacing:-.2px">Historic - Job</span>
<span class="t bl" style="left:446px;top:385px;letter-spacing:-.2px">Historic - Task</span>
<div style="left:144px;top:404px;width:268px;height:23px;background:#fff;border:1px solid #abc1de"></div>
<svg style="left:148px;top:408px" width="14" height="14" viewBox="0 0 14 14"><defs><linearGradient id="tbi" x1="0" y1="0" x2="1" y2="1"><stop offset="0" stop-color="#b4ccf4"/><stop offset="1" stop-color="#5484cc"/></linearGradient></defs><rect x=".5" y=".5" width="13" height="13" rx="1.2" fill="#fff" stroke="url(#tbi)"/><rect x="2" y="2" width="10" height="1" fill="#78c070"/><path d="M2 4.5H12M2 6.5H12M2 8.5H12M2 10.5H12M2.5 4V12M4.5 4V12M8.5 4V12" stroke="#b4caf0" stroke-width="1" fill="none"/></svg>
<span class="t" style="left:166px;top:409px;letter-spacing:-.22px;color:#0a1a3a">BARD_Reports</span>
<svg style="left:402px;top:414px" width="7" height="4" viewBox="0 0 7 4" shape-rendering="crispEdges"><path d="M0 0 H7 L3.5 4 Z" fill="#3b5a82"/></svg>
<div style="left:419px;top:404px;width:255px;height:23px;background:#fff;border:1px solid #abc1de"></div>
<div style="left:422px;top:409px;width:15px;height:12px;background:#000;border-top:2px solid #1414e6;border-right:1px solid #808080;border-bottom:1px solid #808080;overflow:hidden"><span class="t" style="left:1px;top:-2px;font:bold 8px/12px 'Liberation Sans',sans-serif;color:#fff;letter-spacing:0">C:\</span></div>
<span class="t" style="left:441px;top:409px;letter-spacing:-.2px;color:#0a1a3a">BARD_Reports.bat</span>
<svg style="left:664px;top:414px" width="7" height="4" viewBox="0 0 7 4" shape-rendering="crispEdges"><path d="M0 0 H7 L3.5 4 Z" fill="#3b5a82"/></svg>
<div class="sunk" style="left:147px;top:435px;width:120px;height:20px;"></div>
<span class="t" style="left:152px;top:439px;">9/22/2015</span>
<div style="left:250px;top:437px;width:15px;height:16px;background:linear-gradient(#f6f6f6,#d2d2d2);border-left:1px solid #9a9a9a"><svg style="left:4px;top:7px" width="7" height="4" viewBox="0 0 7 4" shape-rendering="crispEdges"><path d="M0 0 H7 L3.5 4 Z" fill="#000"/></svg>
</div>
<span class="t" style="left:275px;top:438px;">-</span>
<div class="sunk" style="left:291px;top:435px;width:120px;height:20px;"></div>
<span class="t" style="left:296px;top:439px;">9/24/2015</span>
<div style="left:394px;top:437px;width:15px;height:16px;background:linear-gradient(#f6f6f6,#d2d2d2);border-left:1px solid #9a9a9a"><svg style="left:4px;top:7px" width="7" height="4" viewBox="0 0 7 4" shape-rendering="crispEdges"><path d="M0 0 H7 L3.5 4 Z" fill="#000"/></svg>
</div>
<div style="left:418px;top:435px;width:75px;height:23px;background:#f0f0f0;border:1px solid #adadad"></div>
<span class="t" style="left:446px;top:440px;">Get</span>
<div style="left:147px;top:464px;width:679px;height:400px;border:1px dotted #000;background:#fff"></div>
<div class="lh" style="left:148px;top:465px;width:120px;height:23px;"></div>
<span class="t" style="left:148px;top:470px;width:108px;text-align:center">Event time</span>
<svg style="left:255px;top:471px" width="9" height="9" viewBox="0 0 9 9"><path d="M1 1 H8 L4.5 8 Z" fill="#e4e3e8" stroke="#9a9a9a" stroke-width="1"/></svg>
<div class="lh" style="left:268px;top:465px;width:20px;height:23px;"></div>
<div class="lh" style="left:288px;top:465px;width:62px;height:23px;"></div>
<span class="t" style="left:288px;top:470px;width:62px;text-align:center">Exit code</span>
<div class="lh" style="left:350px;top:465px;width:107px;height:23px;"></div>
<span class="t" style="left:350px;top:470px;width:107px;text-align:center">Output (standard)</span>
<div class="lh" style="left:457px;top:465px;width:99px;height:23px;"></div>
<span class="t" style="left:457px;top:470px;width:99px;text-align:center">Output (error)</span>
<div class="lh" style="left:556px;top:465px;width:253px;height:23px;"></div>
<span class="t" style="left:556px;top:470px;width:253px;text-align:center">Execution time</span>
<div style="left:809px;top:465px;width:16px;height:400px;background-image:repeating-conic-gradient(#fff 0 25%,#d4d0c8 0 50%);background-size:2px 2px"></div>
<div class="sbb" style="left:809px;top:465px;width:16px;height:16px;"><svg style="left:3px;top:5px" width="7" height="4" viewBox="0 0 7 4" shape-rendering="crispEdges"><path d="M0 4 H7 L3.5 0 Z" fill="#000"/></svg></div>
<div class="sbb" style="left:809px;top:481px;width:16px;height:17px;"></div>
<div style="left:148px;top:488px;width:661px;height:21px;background:#fff;border-bottom:1px solid #c6c6c6"></div>
<div style="left:267px;top:488px;width:1px;height:21px;background:#c6c6c6"></div>
<div style="left:287px;top:488px;width:1px;height:21px;background:#c6c6c6"></div>
<div style="left:349px;top:488px;width:1px;height:21px;background:#c6c6c6"></div>
<div style="left:456px;top:488px;width:1px;height:21px;background:#c6c6c6"></div>
<div style="left:555px;top:488px;width:1px;height:21px;background:#c6c6c6"></div>
<span class="t" style="left:152px;top:490px;">9/23/2015 9:08:00 P</span>
<svg style="left:269.7px;top:490.7px" width="14.6" height="14.6" viewBox="0 0 16 16"><defs><radialGradient id="g5" cx=".35" cy=".3" r=".85"><stop offset="0" stop-color="#9adf92"/><stop offset="1" stop-color="#46aa42"/></radialGradient></defs><circle cx="8" cy="8" r="7.1" fill="url(#g5)" stroke="#3fa43c" stroke-width="1.3"/><circle cx="8" cy="8" r="5.7" fill="none" stroke="#b6ecb0" stroke-width=".7" opacity=".8"/><path d="M4.6 9 L7.3 11.1 L12 6" fill="none" stroke="#fff" stroke-width="1.9" stroke-linecap="square" stroke-linejoin="miter"/></svg>
<span class="t" style="left:291px;top:490px;">0</span>
<span class="t" style="left:352px;top:490px;letter-spacing:-.12px">Double click for out</span>
<span class="t" style="left:460px;top:490px;">No output</span>
<span class="t" style="left:559px;top:490px;">00:00:03.0</span>
<div style="left:148px;top:509px;width:661px;height:21px;background:#f7f3f7;border-bottom:1px solid #c6c6c6"></div>
<div style="left:267px;top:509px;width:1px;height:21px;background:#c6c6c6"></div>
<div style="left:287px;top:509px;width:1px;height:21px;background:#c6c6c6"></div>
<div style="left:349px;top:509px;width:1px;height:21px;background:#c6c6c6"></div>
<div style="left:456px;top:509px;width:1px;height:21px;background:#c6c6c6"></div>
<div style="left:555px;top:509px;width:1px;height:21px;background:#c6c6c6"></div>
<span class="t" style="left:152px;top:511px;">9/23/2015 9:03:00 P</span>
<svg style="left:269.7px;top:511.7px" width="14.6" height="14.6" viewBox="0 0 16 16"><defs><radialGradient id="g6" cx=".35" cy=".3" r=".85"><stop offset="0" stop-color="#9adf92"/><stop offset="1" stop-color="#46aa42"/></radialGradient></defs><circle cx="8" cy="8" r="7.1" fill="url(#g6)" stroke="#3fa43c" stroke-width="1.3"/><circle cx="8" cy="8" r="5.7" fill="none" stroke="#b6ecb0" stroke-width=".7" opacity=".8"/><path d="M4.6 9 L7.3 11.1 L12 6" fill="none" stroke="#fff" stroke-width="1.9" stroke-linecap="square" stroke-linejoin="miter"/></svg>
<span class="t" style="left:291px;top:511px;">0</span>
<span class="t" style="left:352px;top:511px;letter-spacing:-.12px">Double click for out</span>
<span class="t" style="left:460px;top:511px;">No output</span>
<span class="t" style="left:559px;top:511px;">00:00:03.1</span>
<div style="left:148px;top:530px;width:661px;height:21px;background:#fff;border-bottom:1px solid #c6c6c6"></div>
<div style="left:267px;top:530px;width:1px;height:21px;background:#c6c6c6"></div>
<div style="left:287px;top:530px;width:1px;height:21px;background:#c6c6c6"></div>
<div style="left:349px;top:530px;width:1px;height:21px;background:#c6c6c6"></div>
<div style="left:456px;top:530px;width:1px;height:21px;background:#c6c6c6"></div>
<div style="left:555px;top:530px;width:1px;height:21px;background:#c6c6c6"></div>
<span class="t" style="left:152px;top:532px;">9/23/2015 8:58:00 P</span>
<svg style="left:269.7px;top:532.7px" width="14.6" height="14.6" viewBox="0 0 16 16"><defs><radialGradient id="g7" cx=".35" cy=".3" r=".85"><stop offset="0" stop-color="#9adf92"/><stop offset="1" stop-color="#46aa42"/></radialGradient></defs><circle cx="8" cy="8" r="7.1" fill="url(#g7)" stroke="#3fa43c" stroke-width="1.3"/><circle cx="8" cy="8" r="5.7" fill="none" stroke="#b6ecb0" stroke-width=".7" opacity=".8"/><path d="M4.6 9 L7.3 11.1 L12 6" fill="none" stroke="#fff" stroke-width="1.9" stroke-linecap="square" stroke-linejoin="miter"/></svg>
<span class="t" style="left:291px;top:532px;">0</span>
<span class="t" style="left:352px;top:532px;letter-spacing:-.12px">Double click for out</span>
<span class="t" style="left:460px;top:532px;">No output</span>
<span class="t" style="left:559px;top:532px;">00:00:02.10</span>
<div style="left:148px;top:551px;width:661px;height:21px;background:#f7f3f7;border-bottom:1px solid #c6c6c6"></div>
<div style="left:267px;top:551px;width:1px;height:21px;background:#c6c6c6"></div>
<div style="left:287px;top:551px;width:1px;height:21px;background:#c6c6c6"></div>
<div style="left:349px;top:551px;width:1px;height:21px;background:#c6c6c6"></div>
<div style="left:456px;top:551px;width:1px;height:21px;background:#c6c6c6"></div>
<div style="left:555px;top:551px;width:1px;height:21px;background:#c6c6c6"></div>
<span class="t" style="left:152px;top:553px;">9/23/2015 8:53:00 P</span>
<svg style="left:269.7px;top:553.7px" width="14.6" height="14.6" viewBox="0 0 16 16"><defs><radialGradient id="g8" cx=".35" cy=".3" r=".85"><stop offset="0" stop-color="#9adf92"/><stop offset="1" stop-color="#46aa42"/></radialGradient></defs><circle cx="8" cy="8" r="7.1" fill="url(#g8)" stroke="#3fa43c" stroke-width="1.3"/><circle cx="8" cy="8" r="5.7" fill="none" stroke="#b6ecb0" stroke-width=".7" opacity=".8"/><path d="M4.6 9 L7.3 11.1 L12 6" fill="none" stroke="#fff" stroke-width="1.9" stroke-linecap="square" stroke-linejoin="miter"/></svg>
<span class="t" style="left:291px;top:553px;">0</span>
<span class="t" style="left:352px;top:553px;letter-spacing:-.12px">Double click for out</span>
<span class="t" style="left:460px;top:553px;">No output</span>
<span class="t" style="left:559px;top:553px;">00:00:03.0</span>
<div style="left:148px;top:572px;width:661px;height:21px;background:#fff;border-bottom:1px solid #c6c6c6"></div>
<div style="left:267px;top:572px;width:1px;height:21px;background:#c6c6c6"></div>
<div style="left:287px;top:572px;width:1px;height:21px;background:#c6c6c6"></div>
<div style="left:349px;top:572px;width:1px;height:21px;background:#c6c6c6"></div>
<div style="left:456px;top:572px;width:1px;height:21px;background:#c6c6c6"></div>
<div style="left:555px;top:572px;width:1px;height:21px;background:#c6c6c6"></div>
<span class="t" style="left:152px;top:574px;">9/23/2015 8:48:00 P</span>
<svg style="left:269.7px;top:574.7px" width="14.6" height="14.6" viewBox="0 0 16 16"><defs><radialGradient id="g9" cx=".35" cy=".3" r=".85"><stop offset="0" stop-color="#9adf92"/><stop offset="1" stop-color="#46aa42"/></radialGradient></defs><circle cx="8" cy="8" r="7.1" fill="url(#g9)" stroke="#3fa43c" stroke-width="1.3"/><circle cx="8" cy="8" r="5.7" fill="none" stroke="#b6ecb0" stroke-width=".7" opacity=".8"/><path d="M4.6 9 L7.3 11.1 L12 6" fill="none" stroke="#fff" stroke-width="1.9" stroke-linecap="square" stroke-linejoin="miter"/></svg>
<span class="t" style="left:291px;top:574px;">0</span>
<span class="t" style="left:352px;top:574px;letter-spacing:-.12px">Double click for out</span>
<span class="t" style="left:460px;top:574px;">No output</span>
<span class="t" style="left:559px;top:574px;">00:00:03.0</span>
<div style="left:148px;top:593px;width:661px;height:21px;background:#f7f3f7;border-bottom:1px solid #c6c6c6"></div>
<div style="left:267px;top:593px;width:1px;height:21px;background:#c6c6c6"></div>
<div style="left:287px;top:593px;width:1px;height:21px;background:#c6c6c6"></div>
<div style="left:349px;top:593px;width:1px;height:21px;background:#c6c6c6"></div>
<div style="left:456px;top:593px;width:1px;height:21px;background:#c6c6c6"></div>
<div style="left:555px;top:593px;width:1px;height:21px;background:#c6c6c6"></div>
<span class="t" style="left:152px;top:595px;">9/23/2015 8:43:00 P</span>
<svg style="left:269.7px;top:595.7px" width="14.6" height="14.6" viewBox="0 0 16 16"><defs><radialGradient id="g10" cx=".35" cy=".3" r=".85"><stop offset="0" stop-color="#9adf92"/><stop offset="1" stop-color="#46aa42"/></radialGradient></defs><circle cx="8" cy="8" r="7.1" fill="url(#g10)" stroke="#3fa43c" stroke-width="1.3"/><circle cx="8" cy="8" r="5.7" fill="none" stroke="#b6ecb0" stroke-width=".7" opacity=".8"/><path d="M4.6 9 L7.3 11.1 L12 6" fill="none" stroke="#fff" stroke-width="1.9" stroke-linecap="square" stroke-linejoin="miter"/></svg>
<span class="t" style="left:291px;top:595px;">0</span>
<span class="t" style="left:352px;top:595px;letter-spacing:-.12px">Double click for out</span>
<span class="t" style="left:460px;top:595px;">No output</span>
<span class="t" style="left:559px;top:595px;">00:00:03.1</span>
</div></div>
<div id="tm"><div class="gl" style="left:-7px;top:-660px;width:1383px;height:900px">
<div style="left:1146px;top:660px;width:2px;height:232px;background:#f4f4fc"></div>
<div style="left:1146px;top:660px;width:2px;height:4px;background:#004040"></div>
<div style="left:1146px;top:664px;width:2px;height:24px;background:#3a4a5a"></div>
<div style="left:1146px;top:688px;width:2px;height:19px;background:#000"></div>
<div class="win" style="left:6px;top:660px;width:1140px;height:300px;"></div>
<div style="left:10px;top:664px;width:1132px;height:18px;background:#0a246a"></div>
<svg style="left:12px;top:666px" width="17" height="16" viewBox="0 0 17 16"><rect x="0" y="5" width="3" height="9" fill="#c8c8c8" stroke="#888" stroke-width=".5"/><rect x="0.8" y="6.5" width="1.2" height="1.2" fill="#3c3"/><rect x="3" y="0.5" width="13" height="10" fill="#d8d8d8" stroke="#666" stroke-width="1"/><rect x="4.5" y="2" width="10" height="7" fill="#001800"/><path d="M4.5 6 L7 6 L8.5 3.5 L10 7.5 L11.5 5 L14.5 5" fill="none" stroke="#3f3" stroke-width="1.1"/><rect x="8" y="11" width="3" height="2" fill="#999"/><rect x="5" y="13" width="9" height="1.6" fill="#c0c0c0" stroke="#888" stroke-width=".4"/></svg>
<span class="t" style="left:30px;top:667px;color:#fff;font-weight:bold;letter-spacing:.4px">Windows Task Manager</span>
<div class="btn" style="left:1124px;top:666px;width:16px;height:14px;"><svg style="left:4px;top:3px" width="8" height="7" viewBox="0 0 8 7" shape-rendering="crispEdges"><path d="M0 0h2v1h1v1h2v-1h1v-1h2v1h-1v1h-1v1h-1v1h1v1h1v1h1v1h-2v-1h-1v-1h-2v1h-1v1h-2v-1h1v-1h1v-1h1v-1h-1v-1h-1v-1h-1z" fill="#000"/></svg></div>
<div class="btn" style="left:1106px;top:666px;width:16px;height:14px;"><div style="left:3px;top:2px;width:9px;height:9px;border:1px solid #000;border-top-width:2px"></div></div>
<div class="btn" style="left:1090px;top:666px;width:16px;height:14px;"><div style="left:4px;top:9px;width:6px;height:2px;background:#000"></div></div>
<span class="t" style="left:16px;top:686px;letter-spacing:-.2px"><u>F</u>ile</span>
<span class="t" style="left:44px;top:686px;letter-spacing:-.2px"><u>O</u>ptions</span>
<span class="t" style="left:93px;top:686px;letter-spacing:-.2px"><u>V</u>iew</span>
<span class="t" style="left:127px;top:686px;letter-spacing:-.2px"><u>H</u>elp</span>
<div style="left:15px;top:727px;width:1122px;height:200px;background:#d4d0c8;border-top:1px solid #fff;border-left:1px solid #fff;border-right:1px solid #404040;box-shadow:inset -1px 0 0 #808080"></div>
<div style="left:17px;top:709px;width:68px;height:19px;background:#d4d0c8;border-top:1px solid #fff;border-left:1px solid #fff;border-right:0;border-radius:2px 2px 0 0;"></div>
<span class="t" style="left:23px;top:713px;letter-spacing:-.3px">Applications</span>
<div style="left:147px;top:709px;width:51px;height:19px;background:#d4d0c8;border-top:1px solid #fff;border-left:1px solid #fff;border-right:1px solid #404040;border-radius:2px 2px 0 0;box-shadow:inset -1px 0 0 #808080"></div>
<span class="t" style="left:152px;top:713px;letter-spacing:-.37px">Services</span>
<div style="left:198px;top:709px;width:73px;height:19px;background:#d4d0c8;border-top:1px solid #fff;border-left:1px solid #fff;border-right:1px solid #404040;border-radius:2px 2px 0 0;box-shadow:inset -1px 0 0 #808080"></div>
<span class="t" style="left:203px;top:713px;letter-spacing:-.25px">Performance</span>
<div style="left:271px;top:709px;width:65px;height:19px;background:#d4d0c8;border-top:1px solid #fff;border-left:1px solid #fff;border-right:1px solid #404040;border-radius:2px 2px 0 0;box-shadow:inset -1px 0 0 #808080"></div>
<span class="t" style="left:277px;top:713px;letter-spacing:-.1px">Networking</span>
<div style="left:337px;top:709px;width:42px;height:19px;background:#d4d0c8;border-top:1px solid #fff;border-left:1px solid #fff;border-right:1px solid #404040;border-radius:2px 2px 0 0;box-shadow:inset -1px 0 0 #808080"></div>
<span class="t" style="left:342px;top:713px;letter-spacing:-.3px">Users</span>
<div style="left:85px;top:707px;width:63px;height:21px;background:#d4d0c8;border-top:1px solid #fff;border-left:1px solid #fff;border-right:1px solid #404040;border-radius:2px 2px 0 0;box-shadow:inset -1px 0 0 #808080"></div>
<span class="t" style="left:91px;top:711px;letter-spacing:-.4px">Processes</span>
<div style="left:86px;top:727px;width:60px;height:1px;background:#d4d0c8"></div>
<div class="sunk" style="left:33px;top:744px;width:1088px;height:200px;"></div>
<div style="left:35px;top:763px;width:1068px;height:200px;background:#fff"></div>
<div style="left:35px;top:746px;width:211px;height:17px;background:#d4d0c8;box-shadow:inset 1px 1px 0 #fff,inset -1px -1px 0 #404040,inset -2px -2px 0 #808080"></div>
<span class="t" style="left:41px;top:749px;">Image Name</span>
<div style="left:246px;top:746px;width:50px;height:17px;background:#d4d0c8;box-shadow:inset 1px 1px 0 #fff,inset -1px -1px 0 #404040,inset -2px -2px 0 #808080"></div>
<span class="t" style="left:252px;top:749px;">PID</span>
<div style="left:296px;top:746px;width:197px;height:17px;background:#d4d0c8;box-shadow:inset 1px 1px 0 #fff,inset -1px -1px 0 #404040,inset -2px -2px 0 #808080"></div>
<span class="t" style="left:302px;top:749px;">User Name</span>
<div style="left:493px;top:746px;width:32px;height:17px;background:#d4d0c8;box-shadow:inset 1px 1px 0 #fff,inset -1px -1px 0 #404040,inset -2px -2px 0 #808080"></div>
<span class="t" style="left:499px;top:749px;"><i style="font-style:normal;letter-spacing:-.6px">CPU</i></span>
<div style="left:525px;top:746px;width:97px;height:17px;background:#d4d0c8;box-shadow:inset 1px 1px 0 #fff,inset -1px -1px 0 #404040,inset -2px -2px 0 #808080"></div>
<span class="t" style="left:525px;width:91px;text-align:right;top:749px">CPU Time</span>
<div style="left:622px;top:746px;width:70px;height:17px;background:#d4d0c8;box-shadow:inset 1px 1px 0 #fff,inset -1px -1px 0 #404040,inset -2px -2px 0 #808080"></div>
<span class="t" style="left:622px;width:64px;text-align:right;top:749px">Memory (...</span>
<div style="left:692px;top:746px;width:78px;height:17px;background:#d4d0c8;box-shadow:inset 1px 1px 0 #fff,inset -1px -1px 0 #404040,inset -2px -2px 0 #808080"></div>
<span class="t" style="left:692px;width:72px;text-align:right;top:749px">I/O Reads</span>
<div style="left:770px;top:746px;width:70px;height:17px;background:#d4d0c8;box-shadow:inset 1px 1px 0 #fff,inset -1px -1px 0 #404040,inset -2px -2px 0 #808080"></div>
<span class="t" style="left:770px;width:64px;text-align:right;top:749px">I/O Writes</span>
<div style="left:840px;top:746px;width:263px;height:17px;background:#d4d0c8;box-shadow:inset 1px 1px 0 #fff,inset -1px -1px 0 #404040,inset -2px -2px 0 #808080"></div>
<span class="t" style="left:846px;top:749px;">Description</span>
<svg style="left:110px;top:752px" width="8" height="4" viewBox="0 0 8 4"><path d="M0 4 H8 L4 0 Z" fill="#8e8e8e"/></svg>
<div style="left:1103px;top:746px;width:16px;height:200px;background-image:repeating-conic-gradient(#fff 0 25%,#d4d0c8 0 50%);background-size:2px 2px"></div>
<div class="btn" style="left:1103px;top:746px;width:16px;height:17px;"><svg style="left:4px;top:6px" width="7" height="4" viewBox="0 0 7 4" shape-rendering="crispEdges"><path d="M0 4 H7 L3.5 0 Z" fill="#000"/></svg></div>
<div class="btn" style="left:1103px;top:763px;width:16px;height:200px;"></div>
<span class="t" style="left:40px;top:766px;letter-spacing:-.12px">AdminMenu.exe</span>
<span class="t" style="left:252px;top:766px;">11664</span>
<span class="t" style="left:301px;top:766px;">mrp2279</span>
<span class="t" style="left:505px;top:766px;">00</span>
<span class="t" style="left:515px;width:100px;text-align:right;top:766px;">0:00:00</span>
<span class="t" style="left:585px;width:100px;text-align:right;top:766px;">13,508 K</span>
<span class="t" style="left:663px;width:100px;text-align:right;top:766px;">34</span>
<span class="t" style="left:733px;width:100px;text-align:right;top:766px;">3</span>
<span class="t" style="left:845px;top:766px;letter-spacing:-.12px">AdminMenu</span>
<span class="t" style="left:40px;top:783px;letter-spacing:-.12px">AGCMonitorService.exe</span>
<span class="t" style="left:252px;top:783px;">4300</span>
<span class="t" style="left:301px;top:783px;">svcOPI</span>
<span class="t" style="left:505px;top:783px;">00</span>
<span class="t" style="left:515px;width:100px;text-align:right;top:783px;">0:00:04</span>
<span class="t" style="left:585px;width:100px;text-align:right;top:783px;">36,576 K</span>
<span class="t" style="left:663px;width:100px;text-align:right;top:783px;">334,835</span>
<span class="t" style="left:733px;width:100px;text-align:right;top:783px;">121,088</span>
<span class="t" style="left:845px;top:783px;letter-spacing:-.12px">AGCMonitorService</span>
<span class="t" style="left:40px;top:800px;letter-spacing:-.12px">AlarmServerService.exe</span>
<span class="t" style="left:252px;top:800px;">3424</span>
<span class="t" style="left:301px;top:800px;">svcOPI</span>
<span class="t" style="left:505px;top:800px;">00</span>
<span class="t" style="left:515px;width:100px;text-align:right;top:800px;">0:00:01</span>
<span class="t" style="left:585px;width:100px;text-align:right;top:800px;">12,368 K</span>
<span class="t" style="left:663px;width:100px;text-align:right;top:800px;">46</span>
<span class="t" style="left:733px;width:100px;text-align:right;top:800px;">1</span>
<span class="t" style="left:845px;top:800px;letter-spacing:-.12px">AlarmServerService</span>
<div style="left:39px;top:814px;width:1064px;height:17px;background:#0a246a;outline:1px dotted #d8c890;outline-offset:-1px"></div>
<span class="t" style="left:40px;top:817px;color:#fff;letter-spacing:-.12px">BARD_Reports.exe</span>
<span class="t" style="left:252px;top:817px;color:#fff;">2224</span>
<span class="t" style="left:301px;top:817px;color:#fff;">svcOPIBJS</span>
<span class="t" style="left:505px;top:817px;color:#fff;">00</span>
<span class="t" style="left:515px;width:100px;text-align:right;top:817px;color:#fff;">0:00:01</span>
<span class="t" style="left:585px;width:100px;text-align:right;top:817px;color:#fff;">25,924 K</span>
<span class="t" style="left:663px;width:100px;text-align:right;top:817px;color:#fff;">317</span>
<span class="t" style="left:733px;width:100px;text-align:right;top:817px;color:#fff;">30</span>
<span class="t" style="left:845px;top:817px;color:#fff;letter-spacing:-.12px"></span>
<span class="t" style="left:40px;top:834px;letter-spacing:-.12px">BARD_Reports.exe</span>
<span class="t" style="left:252px;top:834px;">3692</span>
<span class="t" style="left:301px;top:834px;">svcOPIBJS</span>
<span class="t" style="left:505px;top:834px;">00</span>
<span class="t" style="left:515px;width:100px;text-align:right;top:834px;">0:00:02</span>
<span class="t" style="left:585px;width:100px;text-align:right;top:834px;">25,972 K</span>
<span class="t" style="left:663px;width:100px;text-align:right;top:834px;">317</span>
<span class="t" style="left:733px;width:100px;text-align:right;top:834px;">30</span>
<span class="t" style="left:845px;top:834px;letter-spacing:-.12px"></span>
<span class="t" style="left:40px;top:851px;letter-spacing:-.12px">baretail.exe *32</span>
<span class="t" style="left:252px;top:851px;">4484</span>
<span class="t" style="left:301px;top:851px;">cle9339</span>
<span class="t" style="left:505px;top:851px;">00</span>
<span class="t" style="left:515px;width:100px;text-align:right;top:851px;">0:00:00</span>
<span class="t" style="left:585px;width:100px;text-align:right;top:851px;">2,152 K</span>
<span class="t" style="left:663px;width:100px;text-align:right;top:851px;">5</span>
<span class="t" style="left:733px;width:100px;text-align:right;top:851px;">0</span>
<span class="t" style="left:845px;top:851px;letter-spacing:-.12px">baretail.exe</span>
<span class="t" style="left:40px;top:868px;letter-spacing:-.12px">BPAPIDataExporterService.exe</span>
<span class="t" style="left:252px;top:868px;">4508</span>
<span class="t" style="left:301px;top:868px;">svcOPI</span>
<span class="t" style="left:505px;top:868px;">00</span>
<span class="t" style="left:515px;width:100px;text-align:right;top:868px;">25:46:52</span>
<span class="t" style="left:585px;width:100px;text-align:right;top:868px;">133,504 K</span>
<span class="t" style="left:663px;width:100px;text-align:right;top:868px;">826,435,144</span>
<span class="t" style="left:733px;width:100px;text-align:right;top:868px;">435,754,<i style="font-style:normal;letter-spacing:1.3px">..</i>.</span>
<span class="t" style="left:845px;top:868px;letter-spacing:-.12px">BPAPIDataExporterService</span>
<span class="t" style="left:40px;top:885px;letter-spacing:-.12px">BvSshServer.exe</span>
<span class="t" style="left:252px;top:885px;">1368</span>
<span class="t" style="left:301px;top:885px;">SYSTEM</span>
<span class="t" style="left:505px;top:885px;">00</span>
<span class="t" style="left:515px;width:100px;text-align:right;top:885px;">0:00:00</span>
<span class="t" style="left:585px;width:100px;text-align:right;top:885px;">10,560 K</span>
<span class="t" style="left:663px;width:100px;text-align:right;top:885px;">36</span>
<span class="t" style="left:733px;width:100px;text-align:right;top:885px;">12</span>
<span class="t" style="left:845px;top:885px;letter-spacing:-.12px">Bitvise SSH Server</span>
</div></div>
</body></html>
